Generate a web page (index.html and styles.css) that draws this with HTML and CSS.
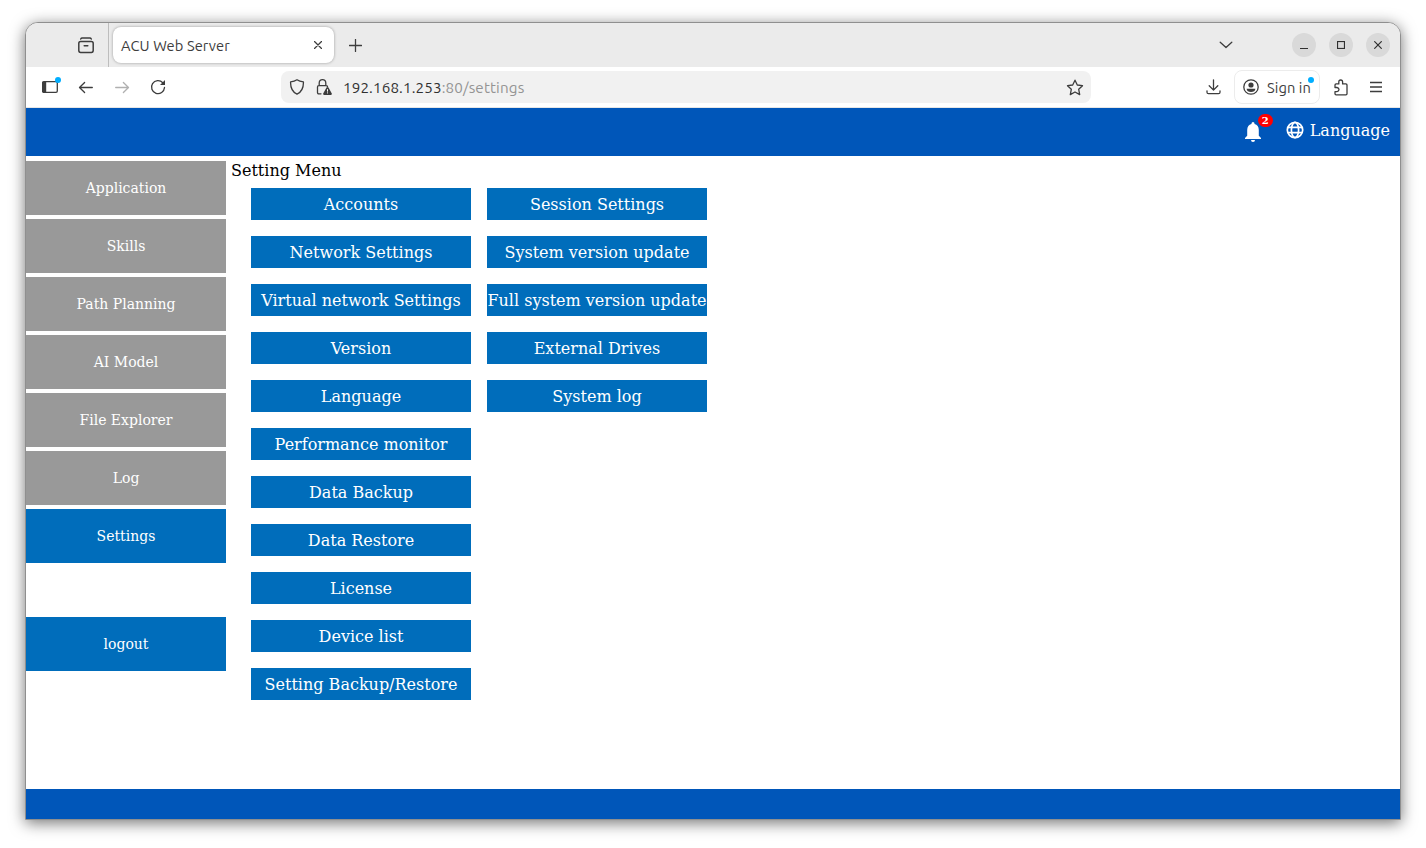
FILE: index.html
```html
<!DOCTYPE html>
<html lang="en">
<head>
    <meta charset="UTF-8">
    <meta name="viewport" content="width=device-width, initial-scale=1.0">
    <title>ACU Web Server</title>
    <link rel="stylesheet" href="styles.css">
</head>
<body>

    <div class="window">

        <!-- Tab strip -->
        <div class="tabbar">
            <div class="tab-tools">
                <svg class="icon" width="18" height="18" viewBox="0 0 18 18">
                    <path d="M3.700 2Q4.200 1.100 5.200 1.100h7.600q1 0 1.500.9"/>
                    <rect x="1.800" y="4.600" width="14.400" height="10.800" rx="1.800"/>
                    <path d="M7.200 8.800h3.600"/>
                </svg>
            </div>
            <div class="tab">
                <span class="tab-title">ACU Web Server</span>
                <svg class="icon" width="8" height="8" viewBox="0 0 8 8"><path d="M.5.5l7 7M7.500.5l-7 7"/></svg>
            </div>
            <svg class="icon new-tab" width="13" height="13" viewBox="0 0 13 13"><path d="M6.500.5v12M.5 6.500h12"/></svg>
            <svg class="icon tab-list" width="14" height="8" viewBox="0 0 14 8"><path d="M1.200 1.200L7 6.600l5.800-5.400"/></svg>
            <div class="window-buttons">
                <span class="window-button"><svg width="8" height="8"><path d="M0 7.500h8"/></svg></span>
                <span class="window-button"><svg width="8" height="8"><rect x=".5" y=".5" width="7" height="7"/></svg></span>
                <span class="window-button"><svg width="8" height="8"><path d="M.3.3l7.400 7.400M7.700.3L.3 7.700"/></svg></span>
            </div>
        </div>

        <!-- Navigation bar -->
        <div class="toolbar">
            <div class="nav-buttons">
                <span class="nav-button">
                    <svg class="icon" width="18" height="14" viewBox="0 0 18 14">
                        <rect x="1.700" y="1.700" width="14.600" height="10.600" rx="1.300"/>
                        <path class="solid" d="M2.200 1.500h3v11h-3q-1.200 0-1.200-1.200V2.700q0-1.200 1.200-1.200z"/>
                    </svg>
                    <span class="dot sidebar-dot"></span>
                </span>
                <span class="nav-button">
                    <svg class="icon" width="16" height="14" viewBox="0 0 16 14"><path d="M14.300 7.500H1.800M6.600 2.500L1.500 7.500l5.100 5"/></svg>
                </span>
                <span class="nav-button disabled">
                    <svg class="icon" width="16" height="14" viewBox="0 0 16 14"><path d="M1.700 7.500h12.500M9.400 2.500l5.100 5-5.100 5"/></svg>
                </span>
                <span class="nav-button">
                    <svg class="icon" width="16" height="16" viewBox="0 0 16 16">
                        <path d="M14.500 8.500A6.500 6.500 0 1 1 12.800 3.700"/>
                        <path class="solid" d="M15 .9v5H10z"/>
                    </svg>
                </span>
            </div>
            <div class="urlbar">
                <svg class="icon" width="16" height="16" viewBox="0 0 16 16"><path d="M8 .8Q10.500 2.600 14.400 2.900q.4 9-6.400 12.300Q1.200 11.900 1.600 2.900 5.500 2.600 8 .8z"/></svg>
                <svg class="icon lock" width="16" height="16" viewBox="0 0 16 16">
                    <path d="M5 14.800H2.800Q1.500 14.800 1.500 13.500V8Q1.500 6.700 2.800 6.700h7.400q1 0 1.300.8M3.200 6.500V4Q3.300.7 6.500.7T9.800 4v2.500"/>
                    <path class="solid" d="M11.500 7.900q.7 0 1 .6l3.300 6q.4 1.400-.8 1.400H8q-1.200 0-.8-1.400l3.300-6q.3-.6 1-.6z"/>
                    <path class="mark" d="M11.500 10.200v2.400M11.500 13.400v1"/>
                </svg>
                <span class="url"><span class="host">192.168.1.253</span>:80/settings</span>
                <svg class="icon star" width="18" height="17" viewBox="0 0 18 17"><path d="M9 1.200l2.300 4.800 5.200.7-3.800 3.600 1 5.300L9 13l-4.700 2.600 1-5.300L1.500 6.700 6.700 6z"/></svg>
            </div>
            <div class="actions">
                <svg class="icon" width="15" height="16" viewBox="0 0 15 16"><path d="M7.500.8v10M3.200 6.800l4.300 4.300 4.300-4.300M1 11.800V13.200Q1 14.700 2.500 14.700h10Q14 14.700 14 13.200V11.800"/></svg>
                <span class="sign-in">
                    <svg class="icon" width="16" height="16" viewBox="0 0 16 16">
                        <circle cx="8" cy="8" r="7.200"/>
                        <circle class="solid" cx="8" cy="6" r="2.600"/>
                        <path class="solid" d="M3.600 9.800h8.800Q12 13 8 13T3.600 9.800z"/>
                    </svg>
                    <span class="sign-in-text">Sign in</span>
                    <span class="dot sign-in-dot"></span>
                </span>
                <svg class="icon puzzle" width="14" height="17" viewBox="0 0 14 17"><path d="M1 7.600V6Q1 4.900 2.100 4.900h2.700V3Q4.800 1 6.700 1t1.900 2v1.900h3.300q1.100 0 1.100 1.100v8.800q0 1.100-1.100 1.100H2.100Q1 15.900 1 14.800v-2.100h2q2-.3 2-2.100T3 8.500H1z"/></svg>
                <svg class="icon menu-icon" width="12" height="12" viewBox="0 0 12 12"><path d="M0 1.500h12M0 6h12M0 10.500h12"/></svg>
            </div>
        </div>

        <!-- Page -->
        <header class="header">
            <span class="bell">
                <svg width="16" height="20" viewBox="0 0 16 20"><path d="M8 0q1.500 0 1.500 1.500v.6Q13.700 3.300 13.800 8v5.800L16 16v1H0v-1l2.200-2.200V8Q2.300 3.300 6.500 2.100v-.6Q6.500 0 8 0zM6 18h4q0 2-2 2t-2-2z"/></svg>
                <span class="badge">2</span>
            </span>
            <svg class="globe" width="18" height="18" viewBox="0 0 18 18">
                <circle cx="9" cy="9" r="7.700"/>
                <ellipse cx="9" cy="9" rx="3.600" ry="7.700"/>
                <path d="M2 6.300h14M2 11.700h14"/>
            </svg>
            <span class="language">Language</span>
        </header>

        <div class="content">
            <nav class="sidebar">
                <a class="side-item">Application</a>
                <a class="side-item">Skills</a>
                <a class="side-item">Path Planning</a>
                <a class="side-item">AI Model</a>
                <a class="side-item">File Explorer</a>
                <a class="side-item">Log</a>
                <a class="side-item active">Settings</a>
                <a class="side-item active logout">logout</a>
            </nav>
            <main class="main">
                <div class="title">Setting Menu</div>
                <div class="menu">
                    <a class="menu-item">Accounts</a>
                    <a class="menu-item">Network Settings</a>
                    <a class="menu-item">Virtual network Settings</a>
                    <a class="menu-item">Version</a>
                    <a class="menu-item">Language</a>
                    <a class="menu-item">Performance monitor</a>
                    <a class="menu-item">Data Backup</a>
                    <a class="menu-item">Data Restore</a>
                    <a class="menu-item">License</a>
                    <a class="menu-item">Device list</a>
                    <a class="menu-item">Setting Backup/Restore</a>
                    <a class="menu-item">Session Settings</a>
                    <a class="menu-item">System version update</a>
                    <a class="menu-item">Full system version update</a>
                    <a class="menu-item">External Drives</a>
                    <a class="menu-item">System log</a>
                </div>
            </main>
        </div>

        <footer class="footer"></footer>
    </div>

</body>
</html>
```

FILE: styles.css
```css
* {
    box-sizing: border-box;
}

body {
    margin: 0;
    padding: 22px 25px 0;
    height: 848px;
    overflow: hidden;
    background: #fff;
    font-family: "DejaVu Serif", serif;
    font-size: 16px;
}

svg {
    display: block;
    flex: none;
}

.window {
    display: flex;
    flex-direction: column;
    height: 798px;
    border: 1px solid #8f8f8f;
    border-radius: 13px 13px 0 0;
    overflow: hidden;
    box-shadow: 0 3px 15px rgba(0, 0, 0, 0.55);
    background: #fff;
}

/* browser frame */

.tabbar,
.toolbar {
    display: flex;
    align-items: center;
    flex: none;
    font-family: Ubuntu, "Noto Sans", sans-serif;
    color: #3d3d3d;
}

.tabbar {
    height: 44px;
    background: #ebebeb;
}

.icon {
    fill: none;
    stroke: #3d3d3d;
    stroke-width: 1.3;
    stroke-linecap: round;
    stroke-linejoin: round;
}

.icon .solid {
    fill: #3d3d3d;
    stroke: none;
}

.icon .mark {
    stroke: #fff;
    stroke-width: 1;
    stroke-linecap: butt;
}

.tab-tools {
    width: 83px;
    height: 44px;
    padding: 14px 0 0 51px;
    border-right: 1px solid #bdbdbd;
}

.tab-tools .icon {
    stroke-width: 1.5;
}

.tab {
    display: flex;
    align-items: center;
    justify-content: space-between;
    width: 221px;
    height: 36px;
    margin-left: 4px;
    padding: 0 12px 0 8px;
    background: #fff;
    border-radius: 8px;
    box-shadow: 0 0 3px rgba(0, 0, 0, 0.35);
}

.tab-title {
    font-size: 14.667px;
    letter-spacing: 0.1px;
}

.new-tab {
    margin-left: 15px;
}

.tab-list {
    margin-left: auto;
}

.window-buttons {
    display: flex;
    gap: 13px;
    margin: 0 10px 0 59px;
}

.window-button {
    display: flex;
    align-items: center;
    justify-content: center;
    width: 24px;
    height: 24px;
    border-radius: 50%;
    background: #d9d9d9;
}

.window-button svg {
    fill: none;
    stroke: #303030;
    stroke-width: 1.2;
}

.toolbar {
    height: 41px;
    border-bottom: 1px solid #e6e6e6;
}

.nav-buttons {
    display: flex;
    width: 255px;
    padding-left: 6px;
}

.nav-button {
    position: relative;
    display: flex;
    align-items: center;
    justify-content: center;
    width: 36px;
    height: 32px;
}

.disabled {
    opacity: 0.4;
}

.dot {
    position: absolute;
    width: 6px;
    height: 6px;
    border-radius: 50%;
    background: #00aeff;
}

.sidebar-dot {
    top: 6px;
    right: 7px;
}

.urlbar {
    display: flex;
    align-items: center;
    width: 810px;
    height: 32px;
    padding: 0 7px 0 8px;
    background: #f1f1f1;
    border-radius: 8px;
}

.lock {
    margin: 0 11px;
}

.url {
    font-size: 15.2px;
    letter-spacing: 0.14px;
    color: #949494;
}

.host {
    color: #303030;
}

.star {
    margin-left: auto;
}

.actions {
    display: flex;
    align-items: center;
    margin-left: auto;
    padding-right: 18px;
}

.sign-in {
    position: relative;
    display: flex;
    align-items: center;
    width: 86px;
    height: 34px;
    margin-left: 13px;
    padding-left: 8px;
    border: 1px solid #ececec;
    border-radius: 8px;
}

.sign-in-text {
    margin-left: 8px;
    font-size: 14.667px;
    letter-spacing: 0.08px;
    white-space: nowrap;
}

.sign-in-dot {
    top: 6px;
    right: 5px;
}

.puzzle {
    margin: 0 22px 0 14px;
}

.menu-icon {
    stroke-linecap: butt;
    stroke-width: 1.3;
}

/* page */

.header {
    display: flex;
    flex: none;
    justify-content: flex-end;
    height: 48px;
    padding: 13px 10px 0 0;
    background: #0056b9;
    color: #fff;
}

.bell {
    position: relative;
    margin: 1px 25px 0 0;
}

.bell svg {
    fill: #fff;
}

.badge {
    position: absolute;
    top: -8px;
    left: 13px;
    width: 15px;
    height: 13px;
    border-radius: 7px;
    background: #f00;
    font-size: 10px;
    font-weight: bold;
    line-height: 13px;
    text-align: center;
}

.globe {
    margin-right: 6px;
    fill: none;
    stroke: #fff;
    stroke-width: 1.7;
}

.language {
    line-height: 19px;
}

.content {
    display: flex;
    flex: 1;
}

.sidebar {
    display: flex;
    flex-direction: column;
    gap: 4px;
    width: 200px;
    padding-top: 5px;
}

.side-item {
    height: 54px;
    background: #999;
    color: #fff;
    font-size: 14px;
    line-height: 54px;
    text-align: center;
}

.active {
    background: #006dbb;
}

.logout {
    margin-top: 50px;
}

.main {
    padding: 5px 0 0 5px;
}

.title {
    height: 19px;
    line-height: 19px;
}

.menu {
    display: grid;
    grid-template-rows: repeat(11, 32px);
    grid-auto-flow: column;
    grid-auto-columns: 220px;
    gap: 16px;
    margin: 8px 0 0 20px;
}

.menu-item {
    padding-top: 1px;
    background: #006dbb;
    color: #fff;
    line-height: 31px;
    text-align: center;
    white-space: nowrap;
}

.footer {
    flex: none;
    height: 30px;
    background: #0056b9;
}
```
